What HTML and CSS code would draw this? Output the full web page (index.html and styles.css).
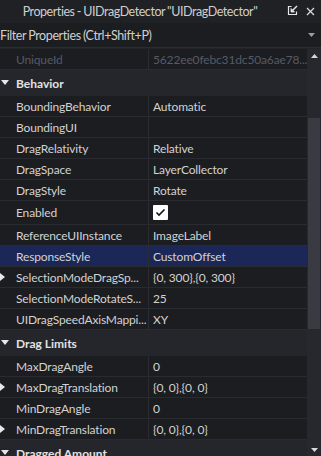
FILE: index.html
```html
<!DOCTYPE html>
<html>
<head>
<meta charset="utf-8">
<link rel="stylesheet" href="styles.css">
</head>
<body>
<div class="titlebar">
  <div class="title">Properties - UIDragDetector "UIDragDetector"</div>
  <div class="tb-icons">
    <svg class="ic-undock" width="11" height="11" viewBox="0 0 11 11"><path d="M4.5 1.5H1.5V9.5H9.5V6.5" fill="none" stroke="#e6e6e6" stroke-width="1.2"/><path d="M10 1L5 6" stroke="#e6e6e6" stroke-width="1.4"/><path d="M4 3.5V7H7.5Z" fill="#e6e6e6" stroke="#e6e6e6" stroke-width="0.8"/></svg>
    <svg class="ic-close" width="9" height="9" viewBox="0 0 9 9"><path d="M1 1L8 8M8 1L1 8" stroke="#d8d8d8" stroke-width="1.3"/></svg>
  </div>
</div>
<div class="filter">
  <span class="filter-text">Filter Properties (Ctrl+Shift+P)</span>
  <svg class="dd" width="7" height="4" viewBox="0 0 7 4"><path d="M0 0H7L3.5 4Z" fill="#9a9ca4"/></svg>
</div>
<div class="sep"></div>
<div class="main">
  <div class="list">
    <div class="row dim"><div class="name">UniqueId</div><div class="val">5622ee0febc31dc50a6ae78...</div></div>
    <div class="header"><span class="tri-down"></span>Behavior</div>
    <div class="row"><div class="name">BoundingBehavior</div><div class="val">Automatic</div></div>
    <div class="row"><div class="name">BoundingUI</div><div class="val"></div></div>
    <div class="row"><div class="name">DragRelativity</div><div class="val">Relative</div></div>
    <div class="row"><div class="name">DragSpace</div><div class="val">LayerCollector</div></div>
    <div class="row"><div class="name">DragStyle</div><div class="val">Rotate</div></div>
    <div class="row tall"><div class="name">Enabled</div><div class="val"><span class="check"><svg width="11" height="9" viewBox="0 0 11 9"><path d="M1.5 4.5L4 7L9.5 1.5" fill="none" stroke="#111" stroke-width="1.6"/></svg></span></div></div>
    <div class="row"><div class="name">ReferenceUIInstance</div><div class="val">ImageLabel</div></div>
    <div class="row sel"><div class="name">ResponseStyle</div><div class="val">CustomOffset</div></div>
    <div class="row"><span class="tri-right"></span><div class="name">SelectionModeDragSp...</div><div class="val">{0, 300},{0, 300}</div></div>
    <div class="row"><div class="name">SelectionModeRotateS...</div><div class="val">25</div></div>
    <div class="row"><div class="name">UIDragSpeedAxisMappi...</div><div class="val">XY</div></div>
    <div class="header"><span class="tri-down"></span>Drag Limits</div>
    <div class="row"><div class="name">MaxDragAngle</div><div class="val">0</div></div>
    <div class="row"><span class="tri-right"></span><div class="name">MaxDragTranslation</div><div class="val">{0, 0},{0, 0}</div></div>
    <div class="row"><div class="name">MinDragAngle</div><div class="val">0</div></div>
    <div class="row"><span class="tri-right"></span><div class="name">MinDragTranslation</div><div class="val">{0, 0},{0, 0}</div></div>
    <div class="header"><span class="tri-down"></span>Dragged Amount</div>
  </div>
  <div class="scrollbar">
    <div class="sb-btn"><svg width="7" height="4" viewBox="0 0 7 4"><path d="M0 4H7L3.5 0Z" fill="#d8d8d8"/></svg></div>
    <div class="sb-track">
      <div class="sb-thumb"></div>
    </div>
    <div class="sb-btn down"><svg width="7" height="4" viewBox="0 0 7 4"><path d="M0 0H7L3.5 4Z" fill="#d8d8d8"/></svg></div>
  </div>
</div>
</body>
</html>
```

FILE: styles.css
```css
* { box-sizing: border-box; margin: 0; padding: 0; }
html, body {
  width: 321px;
  height: 456px;
  overflow: hidden;
  background: #1e1f23;
}
body {
  font-family: Lato, "Liberation Sans", sans-serif;
  font-size: 12px;
  color: #d2d2d2;
}
.titlebar {
  height: 23px;
  background: #202124;
  display: flex;
  align-items: center;
}
.title {
  width: 280px;
  text-align: center;
  color: #cfcfcf;
  white-space: nowrap;
  font-size: 12.5px;
  letter-spacing: -0.45px;
  word-spacing: -0.5px;
}
.tb-icons {
  display: flex;
  align-items: center;
  gap: 8px;
  padding-left: 7px;
}
.ic-undock { margin-top: -2px; }
.filter {
  height: 24px;
  background: #1c1d20;
  display: flex;
  align-items: center;
  justify-content: space-between;
  padding-right: 6px;
}
.filter-text {
  color: #d0d0d0;
  white-space: nowrap;
  font-size: 12.5px;
  letter-spacing: -0.4px;
  word-spacing: -0.5px;
}
.sep {
  height: 2px;
  border-top: 1px solid #2c2d32;
  background: #232428;
}
.main {
  display: flex;
  height: 407px;
}
.list {
  width: 307px;
  overflow: hidden;
}
.row {
  position: relative;
  display: flex;
  height: 21px;
  border-bottom: 1px solid #2a2b30;
  background: #1c1d21;
}
.row.tall { height: 24px; }
.name {
  width: 149px;
  flex: none;
  padding-left: 16px;
  border-right: 1px solid #2a2b30;
  display: flex;
  align-items: center;
  white-space: nowrap;
  overflow: hidden;
  letter-spacing: -0.15px;
}
.val {
  flex: 1;
  padding-left: 4px;
  display: flex;
  align-items: center;
  white-space: nowrap;
  overflow: hidden;
  letter-spacing: -0.15px;
}
.row.dim { color: #555a66; background: #1c1d21; }
.row.sel { background: #1b2757; }
.header {
  height: 26px;
  background: #25262b;
  display: flex;
  align-items: center;
  padding-left: 16px;
  font-weight: bold;
  color: #e2e2e2;
  position: relative;
}
.tri-down {
  position: absolute;
  left: 1px;
  top: 10px;
  width: 0;
  height: 0;
  border-left: 4px solid transparent;
  border-right: 4px solid transparent;
  border-top: 5px solid #e8e8e8;
}
.tri-right {
  position: absolute;
  left: 0;
  top: 6px;
  width: 0;
  height: 0;
  border-top: 4px solid transparent;
  border-bottom: 4px solid transparent;
  border-left: 5px solid #e8e8e8;
}
.check {
  width: 15px;
  height: 15px;
  background: #ffffff;
  border-radius: 1px;
  display: flex;
  align-items: center;
  justify-content: center;
}
.scrollbar {
  width: 14px;
  display: flex;
  flex-direction: column;
  background: #27282d;
}
.sb-btn {
  height: 13px;
  display: flex;
  align-items: center;
  justify-content: center;
}
.sb-track {
  flex: 1;
  padding-top: 56px;
  padding-bottom: 114px;
  padding-left: 1px;
}
.sb-thumb {
  height: 100%;
  background: #3a3b42;
  width: 12px;
}
```
